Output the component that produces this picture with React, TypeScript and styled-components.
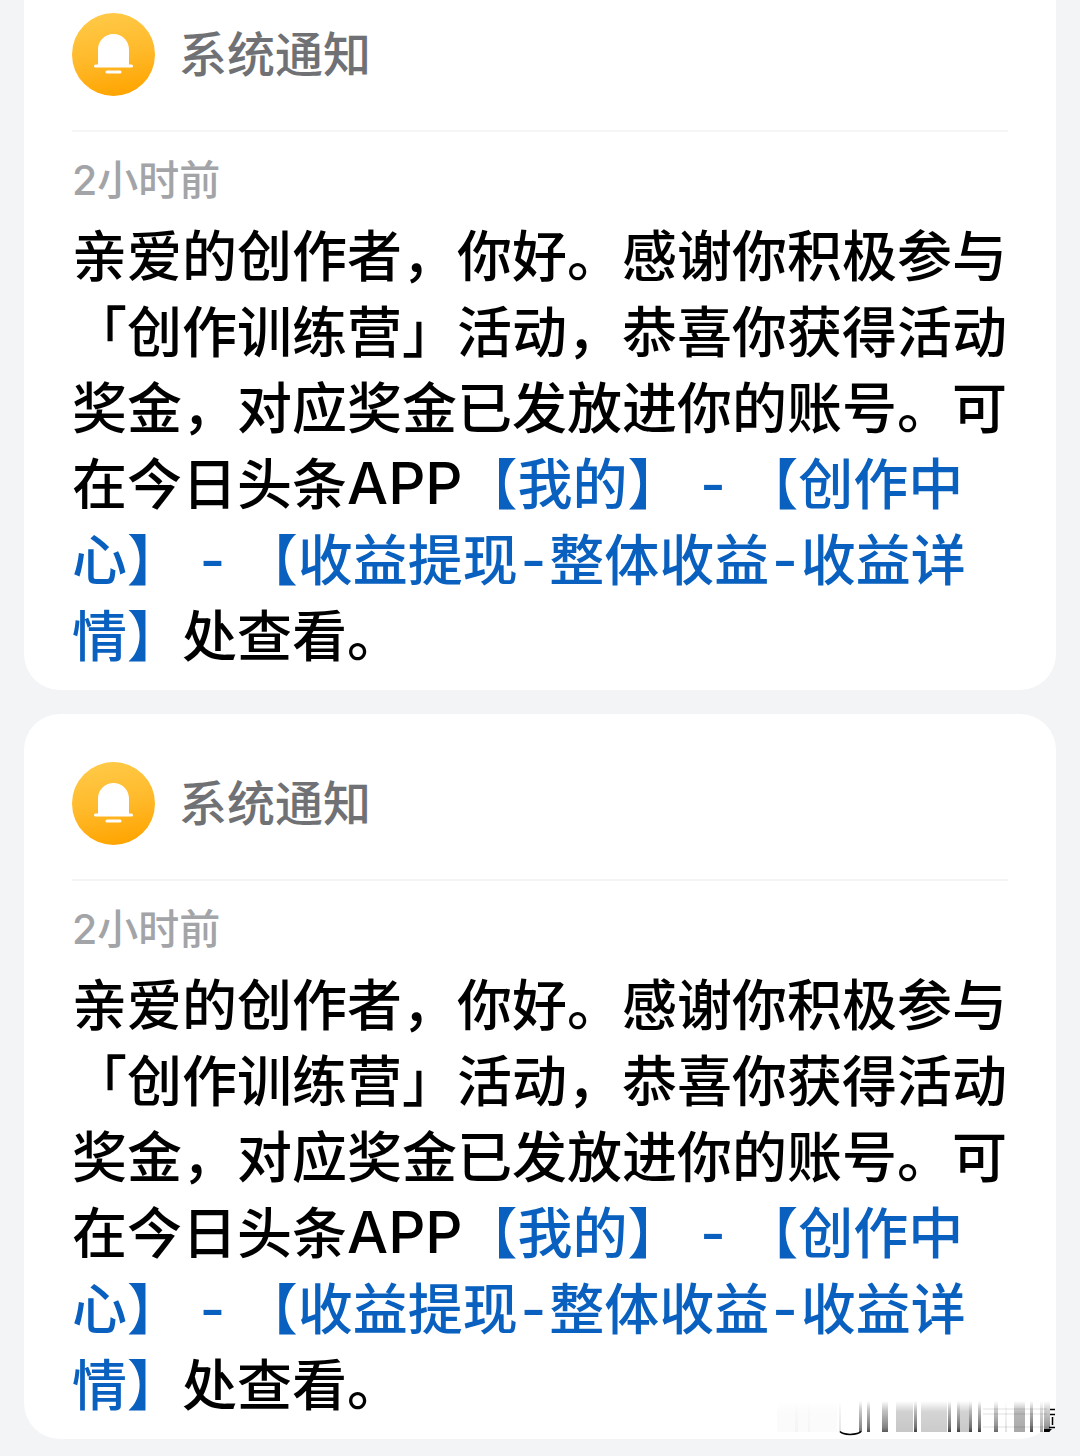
import React from "react";
import styled, { createGlobalStyle } from "styled-components";

const GlobalStyle = createGlobalStyle`
  body {
    margin: 0;
    background: #f3f4f6;
    font-family: Inter, "Noto Sans CJK SC", sans-serif;
    font-weight: 500;
    text-spacing-trim: space-all;
  }
`;

const Feed = styled.main`
  display: flex;
  flex-direction: column;
  gap: 24px;
  padding: 0 24px 16px;
`;

const Card = styled.article<{ $scrolled?: boolean }>`
  position: relative;
  padding: ${(p) => (p.$scrolled ? "13px" : "48px")} 48px 16px;
  border-radius: ${(p) => (p.$scrolled ? "0 0 36px 36px" : "36px")};
  background: #fff;
`;

const Header = styled.header`
  display: flex;
  align-items: center;
  gap: 24px;
  padding-bottom: 34px;
  border-bottom: 2px solid #f5f5f6;
`;

const Title = styled.h2`
  margin: 0;
  font-size: 48px;
  line-height: 83px;
  font-weight: 500;
  color: #707174;
`;

const Time = styled.time`
  display: block;
  padding: 16px 0 6px;
  font-size: 41px;
  line-height: 64px;
  color: #a3a4a7;
`;

const Message = styled.p`
  margin: 0;
  font-size: 55px;
  line-height: 76px;
  color: #000;
`;

const PathLink = styled.a`
  color: #0a60bf;
  text-decoration: none;
`;

const Latin = styled.span`
  font-size: 58px;
  line-height: 1;
`;

const Dash = styled.span`
  padding: 0 3px;
  line-height: 1;
`;

const Smudge = styled.svg`
  position: absolute;
  right: 0;
  bottom: 2px;
`;

function BellIcon({ id }: { id: string }) {
  return (
    <svg width="83" height="83" viewBox="0 0 83 83" aria-hidden="true">
      <defs>
        <linearGradient id={id} x1="0.4" y1="0" x2="0.6" y2="1">
          <stop offset="0" stopColor="#ffc947" />
          <stop offset="0.5" stopColor="#ffba2b" />
          <stop offset="1" stopColor="#ffa400" />
        </linearGradient>
      </defs>
      <circle cx="41.5" cy="41.5" r="41.5" fill={`url(#${id})`} />
      <path
        d="M26 51.500V36.500C26 27.500 33 21 41.500 21S57 27.500 57 36.500V51.500H59.500Q61 51.500 61 53T59.500 54.500H23.500Q22 54.500 22 53T23.500 51.500Z"
        fill="#fff"
      />
      <rect x="33.5" y="57.5" width="16" height="3" rx="1.500" fill="#fff" />
    </svg>
  );
}

const streaks = [
  [2, 60, 0.02], [20, 3, 0.03], [33, 2, 0.03], [64, 2, 0.12], [84, 3, 0.6],
  [92, 3, 0.7], [107, 6, 0.65], [121, 17, 0.26], [139, 3, 0.75],
  [146, 26, 0.24], [173, 3, 0.75], [182, 3, 0.75], [185, 9, 0.25],
  [194, 3, 0.75], [203, 3, 0.75], [219, 4, 0.6], [230, 2, 0.12],
  [239, 11, 0.4], [255, 3, 0.75], [265, 3, 0.4], [269, 6, 0.55],
];

function StreakMark() {
  return (
    <Smudge width="281" height="36" viewBox="0 0 281 36" aria-hidden="true">
      <defs>
        <linearGradient id="streak" x1="0" y1="0" x2="0" y2="1">
          <stop offset="0" stopColor="#000" stopOpacity="0" />
          <stop offset="0.3" stopColor="#000" stopOpacity="0.35" />
          <stop offset="0.85" stopColor="#000" stopOpacity="0.75" />
          <stop offset="1" stopColor="#000" />
        </linearGradient>
        <linearGradient id="haze" x1="0" y1="0" x2="0" y2="1">
          <stop offset="0" stopColor="#000" stopOpacity="0" />
          <stop offset="0.35" stopColor="#000" stopOpacity="0.7" />
          <stop offset="1" stopColor="#000" stopOpacity="0.85" />
        </linearGradient>
      </defs>
      {streaks.map(([x, w, o]) => (
        <rect
          key={x}
          x={x}
          y="0"
          width={w}
          height="31"
          fill={w > 8 ? "url(#haze)" : "url(#streak)"}
          opacity={o}
        />
      ))}
      <path d="M65 30.500Q67 33 75 33.500Q84 33 86 30.500" fill="none" stroke="#000" strokeWidth="1.500" />
      <path d="M208 8H272M208 13H272M208 26H272" stroke="#000" strokeOpacity="0.12" />
      <path d="M275 8.500H280M275 13.500H280M277.500 16V24M274 26.500H280" stroke="#000" strokeWidth="1.500" />
      <path d="M269 28H277L274 31H269Z" fill="#000" />
    </Smudge>
  );
}

interface NoticeProps {
  id: string;
  scrolled?: boolean;
  marked?: boolean;
}

function Notice({ id, scrolled, marked }: NoticeProps) {
  return (
    <Card $scrolled={scrolled}>
      <Header>
        <BellIcon id={id} />
        <Title>系统通知</Title>
      </Header>
      <Time>2小时前</Time>
      <Message>
        亲爱的创作者，你好。感谢你积极参与「创作训练营」活动，恭喜你获得活动奖金，对应奖金已发放进你的账号。可在今日头条<Latin>APP</Latin>
        <PathLink href="#income">
          【我的】 <Dash>-</Dash> 【创作中心】 <Dash>-</Dash> 【收益提现<Dash>-</Dash>整体收益<Dash>-</Dash>收益详情】
        </PathLink>
        处查看。
      </Message>
      {marked && <StreakMark />}
    </Card>
  );
}

export default function App() {
  return (
    <>
      <GlobalStyle />
      <Feed lang="zh-CN">
        <Notice id="bell-first" scrolled />
        <Notice id="bell-second" marked />
      </Feed>
    </>
  );
}
